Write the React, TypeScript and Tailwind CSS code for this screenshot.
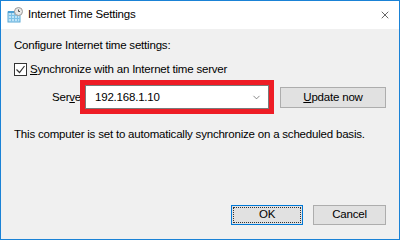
import { ChevronDown, X } from "lucide-react";

const FONT = { fontFamily: '"Liberation Sans", "Segoe UI", sans-serif' };

function AppIcon() {
  return (
    <svg width="16" height="16" viewBox="0 0 16 16">
      <rect x="1" y="5" width="12" height="10" fill="#bfe3f7" stroke="#5aa9d6" strokeWidth="1" />
      <path d="M1.5 8.5h11M1.5 11.5h11M4.5 5.5v9M7.5 5.5v9M10.5 5.5v9" stroke="#7cc0e6" strokeWidth="1" />
      <rect x="1" y="4" width="12" height="2" fill="#4d9fd3" />
      <circle cx="11.5" cy="4.5" r="4" fill="#e8e8e8" stroke="#9a9a9a" strokeWidth="1" />
      <path d="M11.5 2.5v2h1.5" stroke="#555" strokeWidth="1" fill="none" />
    </svg>
  );
}

export default function App() {
  return (
    <div className="w-[400px] h-[240px] flex flex-col border border-[#1a82d6] bg-[#f0f0f0] text-[11.5px] tracking-[-0.2px] text-black overflow-hidden" style={FONT}>
      {/* Title bar */}
      <div className="h-[28px] bg-white flex items-center pl-[6px] pr-[8px] shrink-0">
        <AppIcon />
        <span className="ml-[5px] leading-none">Internet Time Settings</span>
        <X className="ml-auto w-[12px] h-[12px] text-black" strokeWidth={1.2} />
      </div>

      {/* Body */}
      <div className="flex-1 flex flex-col px-[13px] pt-[8px]">
        <p className="leading-[16px]">Configure Internet time settings:</p>

        <label className="flex items-center mt-[8px] h-[16px]">
          <span className="w-[13px] h-[13px] bg-white border border-[#333] grid place-items-center">
            <svg width="11" height="11" viewBox="0 0 11 11">
              <path d="M1.5 5.5l3 3 5-6.5" stroke="#333" strokeWidth="1.2" fill="none" />
            </svg>
          </span>
          <span className="ml-[3px] leading-[16px]">
            <span className="underline">S</span>ynchronize with an Internet time server
          </span>
        </label>

        <div className="flex items-center mt-[8px]">
          <span className="ml-[38px] w-[33px] whitespace-nowrap leading-[16px]">
            Ser<span className="underline">v</span>er:
          </span>
          <div className="relative w-[184px] h-[24px]">
            <div className="h-full bg-white border border-[#7a7a7a] flex items-center pl-[9px] pr-[6px]">
              <span className="leading-[16px]">192.168.1.10</span>
              <ChevronDown className="ml-auto w-[11px] h-[11px] text-[#555]" strokeWidth={1.5} />
            </div>
            <div className="absolute -inset-[5px] border-[5px] border-[#ee1c25]" />
          </div>
          <button className="ml-[11px] w-[106px] h-[21px] bg-[#e1e1e1] border border-[#adadad] leading-[16px]">
            <span className="underline">U</span>pdate now
          </button>
        </div>

        <p className="mt-[17px] leading-[16px] whitespace-nowrap">This computer is set to automatically synchronize on a scheduled basis.</p>

        <div className="mt-auto mb-[14px] flex justify-end gap-[10px]">
          <button className="w-[72px] h-[20px] bg-[#e1e1e1] border border-[#0078d7] p-[1px]">
            <span className="h-full flex items-center justify-center border border-dotted border-[#333] leading-none">OK</span>
          </button>
          <button className="w-[73px] h-[20px] bg-[#e1e1e1] border border-[#adadad] leading-none">Cancel</button>
        </div>
      </div>
    </div>
  );
}
